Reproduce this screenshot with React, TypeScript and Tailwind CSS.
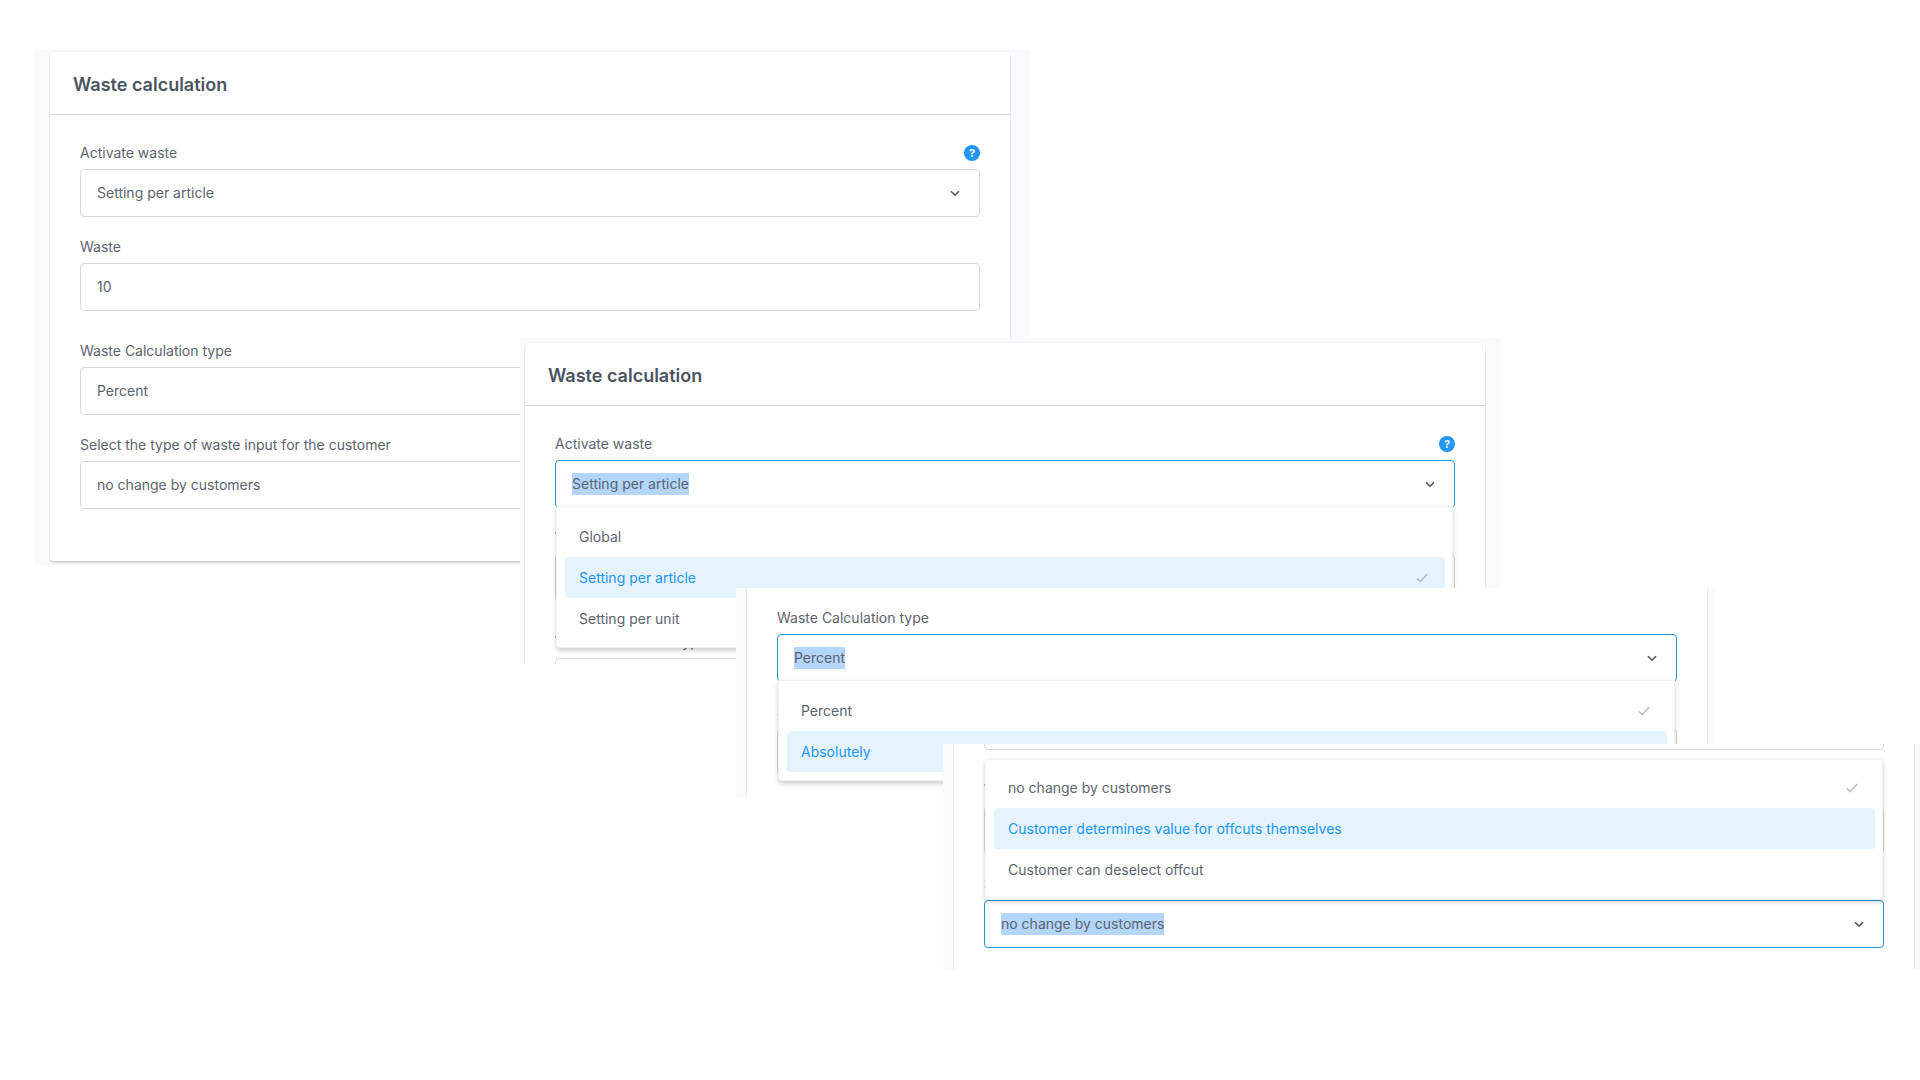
import React from "react";

type Opt = { text: string; active?: boolean; checked?: boolean };

function Chevron() {
  return (
    <svg width="10" height="7" viewBox="0 0 10 7" fill="none" className="shrink-0">
      <path d="M1 1.2 L5 5.2 L9 1.2" stroke="#4b5563" strokeWidth="1.6" />
    </svg>
  );
}

function Check() {
  return (
    <svg width="12" height="10" viewBox="0 0 12 10" fill="none" className="shrink-0">
      <path d="M0.8 5.4 L4.2 8.6 L11.2 1" stroke="#b9bdc6" strokeWidth="1.5" />
    </svg>
  );
}

function Help() {
  return (
    <span className="flex h-4 w-4 items-center justify-center rounded-full bg-[#2196f3] text-[11px] font-bold leading-none text-white">
      ?
    </span>
  );
}

function Menu({ options, up }: { options: Opt[]; up?: boolean }) {
  return (
    <div
      className={
        up
          ? "absolute bottom-[calc(100%+1px)] left-0 right-0 z-10 flex flex-col rounded border border-[#f3f4f6] bg-white pb-[9px] pl-2 pr-[7px] pt-[7px] shadow-[0_2px_5px_rgba(0,0,0,0.18)]"
          : "absolute left-0 right-px top-[calc(100%-1px)] z-10 flex flex-col rounded-b border border-[#f0f1f3] bg-white pb-2 pl-2 pr-[7px] pt-[9px] shadow-[0_3px_5px_rgba(0,0,0,0.18)]"
      }
    >
      {options.map((o) => (
        <div
          key={o.text}
          className={
            o.active
              ? "flex h-[41px] items-center justify-between rounded bg-[#e4f3fe] pl-[14px] pr-[17px] text-[#2196f3]"
              : "flex h-[41px] items-center justify-between rounded pl-[14px] pr-[17px] text-[#5c646f]"
          }
        >
          <span>{o.text}</span>
          {o.checked && <Check />}
        </div>
      ))}
    </div>
  );
}

function Field({
  label,
  value,
  select = true,
  help,
  focused,
  options,
  up,
  className,
}: {
  label: string;
  value: string;
  select?: boolean;
  help?: boolean;
  focused?: boolean;
  options?: Opt[];
  up?: boolean;
  className?: string;
}) {
  return (
    <div className={className}>
      <div className="mb-[6px] flex h-5 items-center justify-between text-[14px] leading-5 text-[#5c646f]">
        <span>{label}</span>
        {help && <Help />}
      </div>
      <div
        className={
          focused
            ? "relative flex h-[48px] items-center justify-between rounded border border-[#2196d8] bg-white pl-4 pr-[19px] text-[14px] text-[#5c646f]"
            : "relative flex h-[48px] items-center justify-between rounded border border-[#d6d8dc] bg-white pl-4 pr-[19px] text-[14px] text-[#5c646f]"
        }
      >
        {focused ? (
          <span className="bg-[#b4d5fd] leading-[22px]">{value}</span>
        ) : (
          <span className="mb-[2px]">{value}</span>
        )}
        {select && <Chevron />}
        {options && <Menu options={options} up={up} />}
      </div>
    </div>
  );
}

function Card({
  open,
  className,
}: {
  open?: "activate" | "calc" | "customer";
  className: string;
}) {
  return (
    <div
      className={
        "w-[960px] rounded bg-white shadow-[0_0_0_1px_rgba(0,0,0,0.03),0_2px_2px_rgba(0,0,0,0.14)] " + className
      }
    >
      <div className="flex h-[63px] items-center border-b border-[#d8dadd] pl-[23px] pt-[2px] text-[18px] font-semibold text-[#4a5360]">
        Waste calculation
      </div>
      <div className="flex flex-col px-[30px] pb-[52px] pt-[28px]">
        <Field
          label="Activate waste"
          value="Setting per article"
          help
          focused={open === "activate"}
          options={
            open === "activate"
              ? [
                  { text: "Global" },
                  { text: "Setting per article", active: true, checked: true },
                  { text: "Setting per unit" },
                ]
              : undefined
          }
        />
        <Field label="Waste" value="10" select={false} className="mt-5" />
        <Field
          label="Waste Calculation type"
          value="Percent"
          className="mt-[30px]"
          focused={open === "calc"}
          options={
            open === "calc"
              ? [{ text: "Percent", checked: true }, { text: "Absolutely", active: true }]
              : undefined
          }
        />
        <Field
          label="Select the type of waste input for the customer"
          value="no change by customers"
          className="mt-5"
          focused={open === "customer"}
          up
          options={
            open === "customer"
              ? [
                  { text: "no change by customers", checked: true },
                  { text: "Customer determines value for offcuts themselves", active: true },
                  { text: "Customer can deselect offcut" },
                ]
              : undefined
          }
        />
      </div>
    </div>
  );
}

export default function App() {
  return (
    <div className="relative h-[1080px] w-[1920px] overflow-hidden bg-white font-['Inter',sans-serif]">
      <div className="absolute isolate left-[35px] top-[49px] h-[516px] w-[995px] overflow-hidden bg-[#f8fafc]">
        <Card className="ml-[15px] mt-[3px]" />
      </div>
      <div className="absolute isolate left-[520px] top-[338px] h-[326px] w-[980px] overflow-hidden bg-[#f8fafc]">
        <Card open="activate" className="ml-[5px] mt-[5px]" />
      </div>
      <div className="absolute isolate left-[736px] top-[588px] h-[209px] w-[979px] overflow-hidden bg-[#f8fafc]">
        <Card open="calc" className="ml-[11px] mt-[-269px]" />
      </div>
      <div className="absolute isolate left-[943px] top-[744px] h-[225px] w-[977px] overflow-hidden bg-[#f8fafc]">
        <Card open="customer" className="ml-[11px] mt-[-253px]" />
      </div>
    </div>
  );
}
